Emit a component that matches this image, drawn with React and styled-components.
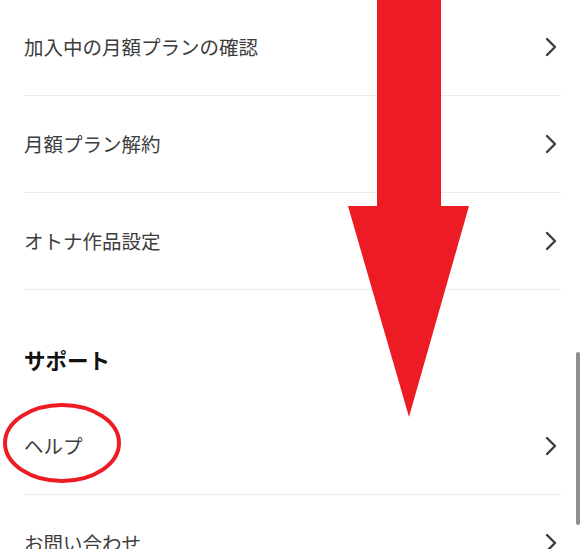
import React from 'react';
import styled, { createGlobalStyle } from 'styled-components';

const GlobalStyle = createGlobalStyle`
  html, body {
    margin: 0;
    padding: 0;
    background: #ffffff;
    overflow: hidden;
  }
  body {
    font-family: "Noto Sans CJK JP", "Noto Sans", sans-serif;
  }
`;

const Screen = styled.div`
  position: relative;
  width: 585px;
  height: 549px;
  overflow: hidden;
  background: #fff;
`;

const List = styled.div`
  margin-top: -1px;
  padding: 0 24px;
  width: 537px;
`;

const Row = styled.div`
  display: flex;
  align-items: center;
  justify-content: space-between;
  height: 96px;
  border-bottom: ${(p) => (p.last ? 'none' : '1.5px solid #ebebeb')};
  color: #3d3d3d;
  font-size: 19.5px;
`;

const Label = styled.span`
  line-height: 1;
`;

const Chevron = styled.svg`
  width: 12px;
  height: 20px;
  margin-right: 4px;
  flex-shrink: 0;
`;

const SectionTitle = styled.h2`
  margin: 0;
  padding: 58px 0 26px;
  height: 24px;
  font-size: 21.5px;
  font-weight: 700;
  line-height: 24px;
  color: #111;
`;

const Overlay = styled.svg`
  position: absolute;
  left: 0;
  top: 0;
  pointer-events: none;
`;

const ScrollThumb = styled.div`
  position: absolute;
  left: 576px;
  top: 352px;
  width: 4px;
  height: 173px;
  border-radius: 2px;
  background: #8f8f8f;
`;

const Arrow = () => (
  <Chevron viewBox="0 0 12 20">
    <path d="M2 2l8 8-8 8" fill="none" stroke="#3a3d42" strokeWidth="2.4" strokeLinecap="round" strokeLinejoin="round" />
  </Chevron>
);

const ListRow = ({ label, last }) => (
  <Row last={last}>
    <Label>{label}</Label>
    <Arrow />
  </Row>
);

export default function App () {
  return (
    <Screen>
      <GlobalStyle />
      <List>
        <ListRow label="加入中の月額プランの確認" />
        <ListRow label="月額プラン解約" />
        <ListRow label="オトナ作品設定" />
        <SectionTitle>サポート</SectionTitle>
        <ListRow label="ヘルプ" />
        <ListRow label="お問い合わせ" last />
      </List>
      <ScrollThumb />
      <Overlay width="585" height="549" viewBox="0 0 585 549">
        <polygon
          points="377,0 441,0 441,206 469,206 409,417 348,206 377,206"
          fill="#ed1c24"
        />
        <ellipse cx="62" cy="443" rx="57" ry="38" fill="none" stroke="#ed1c24" strokeWidth="4" />
      </Overlay>
    </Screen>
  );
}
